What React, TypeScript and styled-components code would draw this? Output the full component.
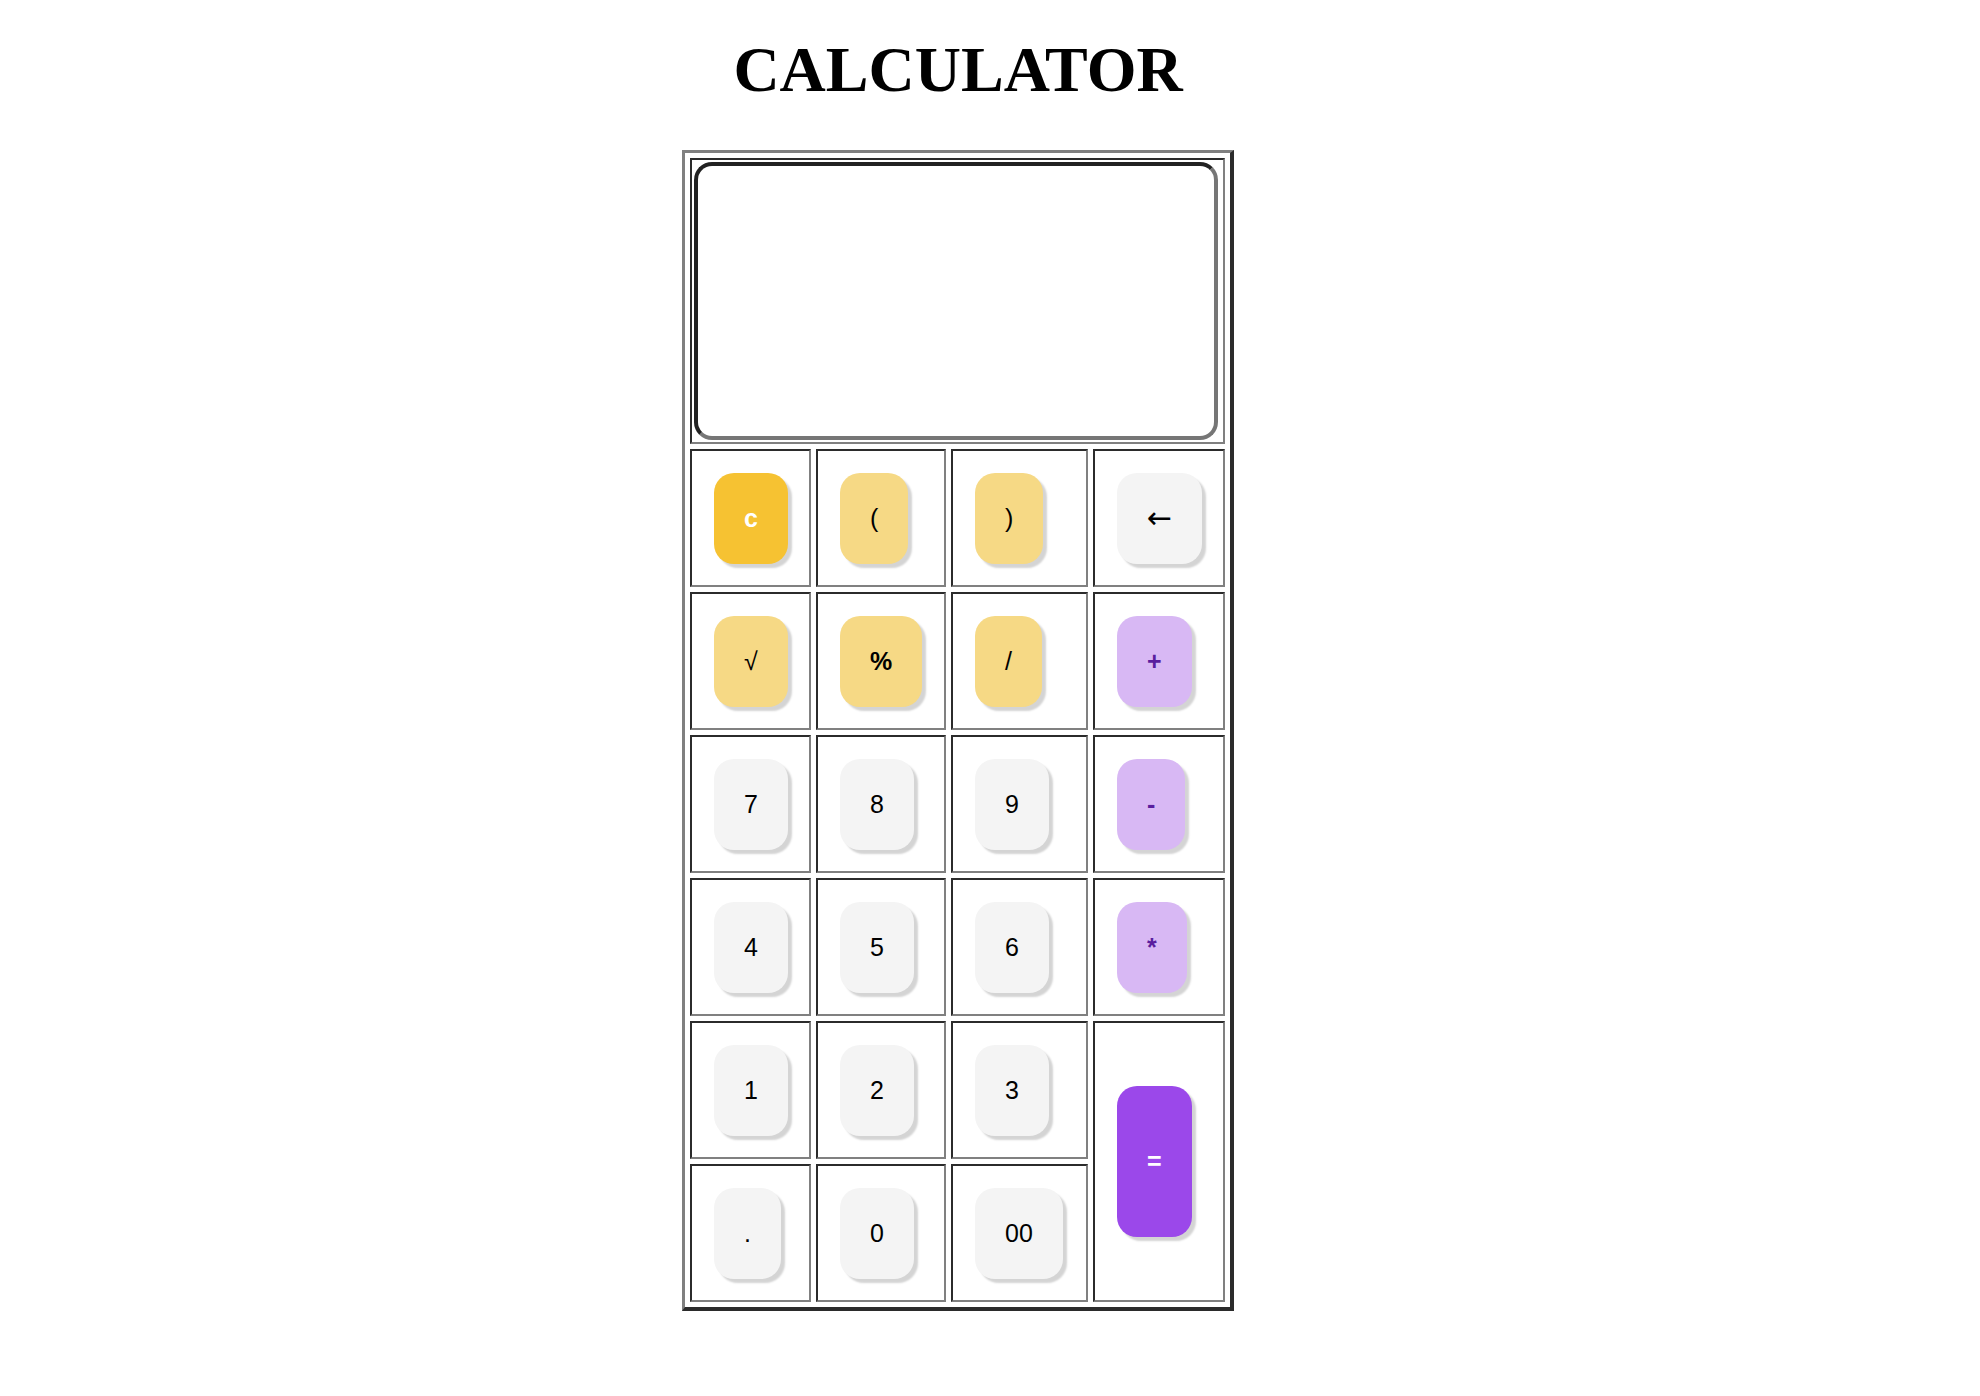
import React from "react";
import styled, { createGlobalStyle } from "styled-components";

const GlobalStyle = createGlobalStyle`
  html, body {
    margin: 0;
    padding: 0;
    background: #ffffff;
  }
`;

const Page = styled.div`
  width: 1916px;
  display: flex;
  flex-direction: column;
  align-items: center;
  padding-top: 37px;
`;

const Title = styled.h1`
  margin: 0;
  font-family: "Liberation Serif", "Times New Roman", serif;
  font-weight: 700;
  font-size: 64px;
  line-height: 65px;
  color: #000;
`;

const Calc = styled.div`
  margin-top: 48px;
  display: grid;
  grid-template-columns: 121px 130px 137px 132px;
  grid-template-rows: 286px repeat(6, 138px);
  gap: 5px;
  padding: 5px;
  border-style: solid;
  border-width: 3px 4px 4px 3px;
  border-color: #808080 #2b2b2b #2b2b2b #808080;
`;

const Cell = styled.div<{ $rows?: number }>`
  box-sizing: border-box;
  border: 2px solid;
  border-color: #2b2b2b #808080 #808080 #2b2b2b;
  display: flex;
  align-items: center;
  padding-left: 22px;
  grid-row: ${(p) => (p.$rows ? `span ${p.$rows}` : "auto")};
`;

const DisplayCell = styled.div`
  grid-column: 1 / -1;
  border: 2px solid;
  border-color: #2b2b2b #808080 #808080 #2b2b2b;
  padding: 2px;
  display: flex;
`;

const Screen = styled.div`
  box-sizing: border-box;
  width: 524px;
  height: 278px;
  border: 4px solid;
  border-color: #222222 #767676 #767676 #222222;
  border-radius: 18px;
  background: #fff;
`;

type Kind = "clear" | "func" | "num" | "op" | "equal";

const palette: Record<Kind, { bg: string; fg: string; weight: number }> = {
  clear: { bg: "#f6c232", fg: "#ffffff", weight: 700 },
  func: { bg: "#f6d985", fg: "#000000", weight: 400 },
  num: { bg: "#f4f4f4", fg: "#000000", weight: 400 },
  op: { bg: "#d8b8f4", fg: "#5a1e9e", weight: 700 },
  equal: { bg: "#9b48ea", fg: "#ffffff", weight: 700 },
};

const Key = styled.button<{ $kind: Kind; $tall?: boolean; $bold?: boolean }>`
  box-sizing: border-box;
  height: ${(p) => (p.$tall ? "151px" : "91px")};
  padding: 0 30px;
  border: none;
  border-radius: 20px;
  background: ${(p) => palette[p.$kind].bg};
  color: ${(p) => palette[p.$kind].fg};
  font-family: "Liberation Sans", Arial, sans-serif;
  font-size: 25px;
  font-weight: ${(p) => (p.$bold ? 700 : palette[p.$kind].weight)};
  box-shadow: 4px 4px 2px #d4d4d4;
  cursor: pointer;
  display: flex;
  align-items: center;
  justify-content: center;
`;

const Arrow = styled.span`
  font-family: "DejaVu Sans", sans-serif;
  font-size: 30px;
  font-weight: 400;
  line-height: 1;
`;

type K = { label: string; kind: Kind; bold?: boolean; tall?: boolean; symbol?: boolean };

const rows: K[][] = [
  [
    { label: "c", kind: "clear" },
    { label: "(", kind: "func" },
    { label: ")", kind: "func" },
    { label: "←", kind: "num", symbol: true },
  ],
  [
    { label: "√", kind: "func" },
    { label: "%", kind: "func", bold: true },
    { label: "/", kind: "func" },
    { label: "+", kind: "op" },
  ],
  [
    { label: "7", kind: "num" },
    { label: "8", kind: "num" },
    { label: "9", kind: "num" },
    { label: "-", kind: "op" },
  ],
  [
    { label: "4", kind: "num" },
    { label: "5", kind: "num" },
    { label: "6", kind: "num" },
    { label: "*", kind: "op" },
  ],
  [
    { label: "1", kind: "num" },
    { label: "2", kind: "num" },
    { label: "3", kind: "num" },
    { label: "=", kind: "equal", tall: true },
  ],
  [
    { label: ".", kind: "num" },
    { label: "0", kind: "num" },
    { label: "00", kind: "num" },
  ],
];

export default function App() {
  return (
    <>
      <GlobalStyle />
      <Page>
        <Title>CALCULATOR</Title>
        <Calc>
          <DisplayCell>
            <Screen />
          </DisplayCell>
          {rows.flat().map((k, i) => (
            <Cell key={i} $rows={k.tall ? 2 : undefined}>
              <Key $kind={k.kind} $tall={k.tall} $bold={k.bold}>
                {k.symbol ? <Arrow>{k.label}</Arrow> : k.label}
              </Key>
            </Cell>
          ))}
        </Calc>
      </Page>
    </>
  );
}
